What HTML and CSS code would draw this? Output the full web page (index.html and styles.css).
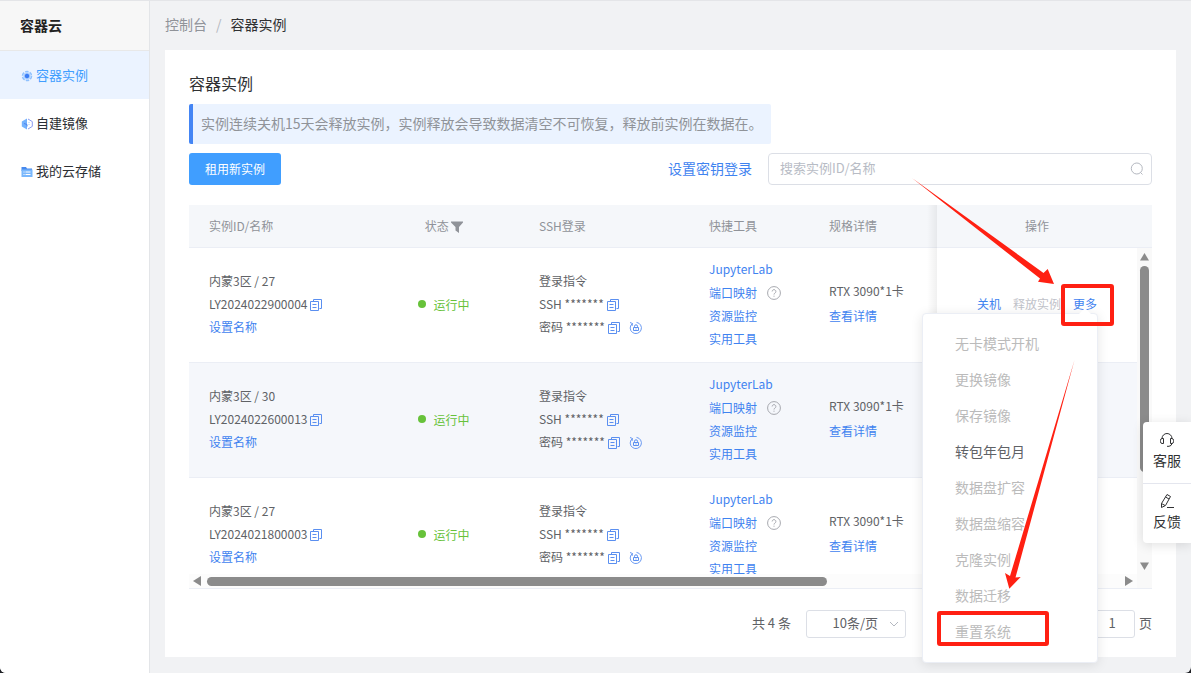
FILE: index.html
```html
<!DOCTYPE html>
<html lang="zh-CN">
<head>
<meta charset="utf-8">
<title>容器实例</title>
<link rel="stylesheet" href="styles.css">
</head>
<body>
<svg class="defs" aria-hidden="true">
  <symbol id="copy" viewBox="0 0 12 12"><path d="M3.500 2.500V.5h8v9h-2M.5 2.500h8v9h-8zM2.500 5.500h4M2.500 8.500h4" fill="none" stroke="currentColor"/></symbol>
  <symbol id="reset" viewBox="0 0 14 14"><path d="M3.300 2.600A5.600 5.600 0 1 0 7.500 1.400M1 1.500l2.500 1-.5 2.500" fill="none" stroke="currentColor" stroke-width=".9"/><path d="M5.500 6.500V5.300a1.500 1.500 0 0 1 3 0v1.200" fill="none" stroke="currentColor"/><path d="M4.500 6.500h5v3h-5zM6.500 8h1" fill="none" stroke="currentColor"/></symbol>
  <symbol id="help" viewBox="0 0 12 12"><circle cx="6" cy="6" r="5.500" fill="none" stroke="currentColor" stroke-width=".8"/><path d="M4.400 4.700a1.600 1.600 0 1 1 2.400 1.400Q6 6.500 6 7.300M6 8.300v.9" fill="none" stroke="currentColor" stroke-width=".8"/></symbol>
</svg>
<div class="app">
  <aside class="sidebar">
    <h1 class="brand">容器云</h1>
    <nav class="nav">
      <a class="nav-item active" href="#"><svg class="nav-icon" viewBox="0 0 12 12"><circle cx="6" cy="6" r="4.500" fill="none" stroke="#8fc1ff" stroke-width="1.600" stroke-dasharray="3.400 1.300"/><circle cx="6" cy="6" r="3.700" fill="#b5d5ff"/><path d="M6 3.500l2.200 1.200v2.600L6 8.500 3.800 7.300V4.700z" fill="#3b7df5"/></svg>容器实例</a>
      <a class="nav-item" href="#"><svg class="nav-icon" viewBox="0 0 12 12"><path d="M6 .6v10.800L.8 8.600V3.400z" fill="#74b2fd"/><path d="M7 1l4.300 2.600v4.800L7 11" fill="none" stroke="#8a9cf0"/><path d="M3 5.500l3 1v2" fill="none" stroke="#4b83ef"/><path d="M8 4v4" stroke="#9fcbff" stroke-dasharray="1 1"/></svg>自建镜像</a>
      <a class="nav-item" href="#"><svg class="nav-icon" viewBox="0 0 12 12"><path d="M.5 1h4.500l1 1.500h5V5H.5z" fill="#4689ee"/><path d="M.5 3.500h11V11H.5z" fill="#79b7fc"/><path d="M2.500 6h1m1 0h5m-7 2.500h1m1 0h5" stroke="#fff"/></svg>我的云存储</a>
    </nav>
  </aside>
  <main class="main">
    <nav class="crumbs"><a href="#">控制台</a><span class="slash">/</span><span class="current">容器实例</span></nav>
    <section class="card">
      <h2 class="title">容器实例</h2>
      <p class="notice">实例连续关机15天会释放实例，实例释放会导致数据清空不可恢复，释放前实例在数据在。</p>
      <div class="toolbar">
        <button class="primary" type="button">租用新实例</button>
        <a class="key-link" href="#">设置密钥登录</a>
        <div class="search"><input type="text" placeholder="搜索实例ID/名称" aria-label="搜索实例"><svg viewBox="0 0 14 14"><circle cx="6.800" cy="6.500" r="5.500" fill="none" stroke="currentColor"/><path d="M10.500 10.500l2 2" stroke="currentColor"/></svg></div>
      </div>
      <div class="table-box">
        <div class="viewport">
          <table class="grid">
            <colgroup><col class="c-id"><col class="c-state"><col class="c-ssh"><col class="c-tools"><col><col class="c-ops"><col class="c-gutter"></colgroup>
            <thead><tr><th>实例ID/名称</th><th class="center">状态 <svg class="filter" viewBox="0 0 12 12"><path d="M0 .5h12v1L8 6v6L4.500 9.500V6L0 1.500z" fill="currentColor"/></svg></th><th>SSH登录</th><th>快捷工具</th><th>规格详情</th><th class="center pinned">操作</th><th></th></tr></thead>
            <tbody>
              <tr>
                <td><div>内蒙3区 / 27</div><div class="line">LY2024022900004<svg class="copy"><use href="#copy"/></svg></div><div><a href="#">设置名称</a></div></td>
                <td class="center"><span class="running">运行中</span></td>
                <td><div>登录指令</div><div class="line">SSH *******<svg class="copy"><use href="#copy"/></svg></div><div class="line">密码 *******<svg class="copy"><use href="#copy"/></svg><svg class="reset"><use href="#reset"/></svg></div></td>
                <td><div><a href="#">JupyterLab</a></div><div class="line port"><a href="#">端口映射</a><svg class="help"><use href="#help"/></svg></div><div><a href="#">资源监控</a></div><div><a href="#">实用工具</a></div></td>
                <td class="spec"><div>RTX 3090*1卡</div><div><a href="#">查看详情</a></div></td>
                <td class="pinned"><div class="ops"><a href="#">关机</a><span class="off">释放实例</span><a href="#">更多</a></div></td><td class="gutter"></td>
              </tr>
              <tr>
                <td><div>内蒙3区 / 30</div><div class="line">LY2024022600013<svg class="copy"><use href="#copy"/></svg></div><div><a href="#">设置名称</a></div></td>
                <td class="center"><span class="running">运行中</span></td>
                <td><div>登录指令</div><div class="line">SSH *******<svg class="copy"><use href="#copy"/></svg></div><div class="line">密码 *******<svg class="copy"><use href="#copy"/></svg><svg class="reset"><use href="#reset"/></svg></div></td>
                <td><div><a href="#">JupyterLab</a></div><div class="line port"><a href="#">端口映射</a><svg class="help"><use href="#help"/></svg></div><div><a href="#">资源监控</a></div><div><a href="#">实用工具</a></div></td>
                <td class="spec"><div>RTX 3090*1卡</div><div><a href="#">查看详情</a></div></td>
                <td class="pinned"></td><td class="gutter"></td>
              </tr>
              <tr>
                <td><div>内蒙3区 / 27</div><div class="line">LY2024021800003<svg class="copy"><use href="#copy"/></svg></div><div><a href="#">设置名称</a></div></td>
                <td class="center"><span class="running">运行中</span></td>
                <td><div>登录指令</div><div class="line">SSH *******<svg class="copy"><use href="#copy"/></svg></div><div class="line">密码 *******<svg class="copy"><use href="#copy"/></svg><svg class="reset"><use href="#reset"/></svg></div></td>
                <td><div><a href="#">JupyterLab</a></div><div class="line port"><a href="#">端口映射</a><svg class="help"><use href="#help"/></svg></div><div><a href="#">资源监控</a></div><div><a href="#">实用工具</a></div></td>
                <td class="spec"><div>RTX 3090*1卡</div><div><a href="#">查看详情</a></div></td>
                <td class="pinned"></td><td class="gutter"></td>
              </tr>
            </tbody>
          </table>
        </div>
        <div class="hbar"><svg viewBox="0 0 8 10"><path d="M0 5l8-5v10z" fill="currentColor"/></svg><span class="htrack"><span class="hthumb"></span></span><svg viewBox="0 0 8 10"><path d="M8 5L0 0v10z" fill="currentColor"/></svg></div>
        <div class="vbar"><svg viewBox="0 0 9 8"><path d="M4.500 0L9 7.500H0z" fill="currentColor"/></svg><span class="vtrack"><span class="vthumb"></span></span><svg viewBox="0 0 9 8"><path d="M4.500 8L9 .5H0z" fill="currentColor"/></svg></div>
      </div>
      <div class="pager">
        <span class="total">共 4 条</span>
        <div class="size"><select aria-label="每页条数"><option>10条/页</option></select><svg viewBox="0 0 10 6"><path d="M1 1l4 4 4-4" fill="none" stroke="currentColor"/></svg></div>
        <label class="jump"><input type="text" value="1"><span>页</span></label>
      </div>
    </section>
  </main>
  <div class="menu">
    <button type="button" disabled>无卡模式开机</button>
    <button type="button" disabled>更换镜像</button>
    <button type="button" disabled>保存镜像</button>
    <button type="button">转包年包月</button>
    <button type="button" disabled>数据盘扩容</button>
    <button type="button" disabled>数据盘缩容</button>
    <button type="button" disabled>克隆实例</button>
    <button type="button" disabled>数据迁移</button>
    <button type="button" disabled>重置系统</button>
  </div>
  <div class="float">
    <button type="button"><svg viewBox="0 0 16 16" fill="none" stroke="currentColor"><path d="M3 6.500a5 5 0 0 1 10 0M4.500 6.500H3q-1.500 0-1.500 2v1q0 2 1.500 2h1.500zM11.500 6.500H13q1.500 0 1.500 2v1q0 2-1.500 2h-1.500zM13 11.500q-.5 2.500-3 2.800H8"/></svg>客服</button>
    <button type="button"><svg viewBox="0 0 16 16" fill="none" stroke="currentColor"><path d="M8 1.500l3.500 2L6.500 12.500l-4 2v-4zM6.500 4L10 6M2.500 10.500l3.500 2M8 14.500h7"/></svg>反馈</button>
  </div>
  <svg class="marks" viewBox="900 160 291 500" aria-hidden="true">
    <g fill="#ff2012"><path d="M912 178L1043.500 273 1047.700 269 1054 284 1038 281.700 1040 278.500z"/><path d="M1074.500 360L1015.500 577.500 1020.700 577 1009.300 588.700 1005 573 1010 576z"/></g>
    <g fill="none" stroke="#ff2012" stroke-width="4"><rect x="1063" y="286" width="49" height="38" rx="1"/><rect x="939" y="613" width="108" height="31" rx="1"/></g>
  </svg>
</div>
</body>
</html>
```

FILE: styles.css
```css
* { box-sizing: border-box; }
html { background: #202226; }
body { margin: 0; color: #606266; font: 12px/23px "Noto Sans CJK SC", sans-serif; }
a { color: #3f83f0; text-decoration: none; }
button, input, select { font: inherit; color: inherit; }
.defs { position: absolute; width: 0; height: 0; }

.app { position: relative; display: flex; min-height: 100vh; overflow: hidden; background: #f1f2f4; border-top: 1px solid #e4e5e8; border-radius: 0 0 6px 6px; }
.sidebar { flex: 0 0 150px; background: #fff; border-right: 1px solid #e3e5e8; }
.brand { margin: 0; padding: 0 20px; height: 50px; font-size: 14px; line-height: 48px; color: #222; background: #f7f7f7; border-bottom: 1px solid #e8e8e8; }
.nav-item { display: flex; align-items: center; gap: 3px; height: 48px; padding: 0 0 2px 21px; font-size: 13px; color: #2b2e33; }
.nav-item.active { color: #409eff; background: #ebf3ff; }
.nav-icon { width: 12px; height: 12px; margin-top: 4px; }

.main { flex: 1; min-width: 0; padding: 0 15px 15px; }
.crumbs { display: flex; align-items: center; height: 49px; padding-bottom: 2px; font-size: 14px; color: #303133; }
.crumbs a { color: #909399; }
.slash { margin: 0 9px; color: #b4b8c0; }
.card { padding: 19px 24px 19px; background: #fff; }
.title { margin: 0 0 7px; font-size: 16px; line-height: 28px; font-weight: 400; color: #303133; }
.notice { width: fit-content; margin: 0 0 9px; padding: 0 8px 2px; font-size: 14px; line-height: 38px; color: #909399; background: #ebf3ff; border-left: 4px solid #4485f4; border-radius: 2px; }
.toolbar { display: flex; align-items: center; gap: 16px; margin-bottom: 20px; }
.primary { width: 92px; height: 32px; padding: 0 0 2px; color: #fff; background: #409eff; border: 0; border-radius: 3px; }
.key-link { margin-left: auto; padding-bottom: 2px; font-size: 14px; }
.search { position: relative; flex: 0 1 384px; }
.search input { width: 100%; height: 32px; padding: 0 36px 4px 11px; font-size: 13px; background: #fff; border: 1px solid #dcdfe6; border-radius: 4px; }
.search input::placeholder { color: #b8bcc5; }
.search svg { position: absolute; right: 8px; top: 9px; width: 14px; height: 14px; color: #b4b8c0; }

.table-box { position: relative; border-bottom: 1px solid #ebeef5; }
.viewport { height: 369px; overflow: hidden; }
.grid { width: 100%; table-layout: fixed; border-collapse: separate; border-spacing: 0; }
.c-id { width: 180px; }
.c-state { width: 150px; }
.c-ssh { width: 170px; }
.c-tools { width: 120px; }
.c-ops { width: 200px; }
.c-gutter { width: 15px; }
th { height: 43px; padding: 0 0 2px 20px; font-weight: 400; text-align: left; color: #909399; background: #f5f7fa; border-bottom: 1px solid #ebeef5; }
td { height: 115px; padding: 0 0 3px 20px; border-bottom: 1px solid #ebeef5; }
tr:nth-child(even) td { background: #f5f7fb; }
th.center, td.center { padding-left: 0; text-align: center; }
th:last-child, td:last-child { padding: 0; }
.pinned { position: relative; padding-left: 0; }
.pinned::before { content: ""; position: absolute; top: 0; bottom: -1px; left: -10px; width: 10px; background: linear-gradient(to left, rgba(0, 0, 0, .06), transparent); }
.filter { width: 12px; height: 12px; vertical-align: -2px; }
.line { display: flex; align-items: center; }
.line svg { color: #5a8ff0; margin-top: 2px; }
.line .copy { width: 12px; height: 12px; margin-left: 3px; }
.line .reset { width: 14px; height: 14px; margin-left: 9px; }
.port { height: 24px; }
.line .help { width: 14px; height: 14px; margin-left: 10px; color: #a0a3a9; }
.spec { padding-bottom: 5px; line-height: 25px; }
.running { display: inline-flex; align-items: center; gap: 7px; color: #67c23a; }
.running::before { content: ""; width: 8px; height: 8px; border-radius: 50%; background: #67c23a; }
.ops { display: flex; justify-content: center; gap: 12px; }
.off { color: #bfc2c9; }

.hbar { display: flex; align-items: center; gap: 6px; height: 14px; margin-right: 15px; padding: 0 4px; color: #8b8b8b; background: #fcfcfc; }
.hbar svg { width: 8px; height: 10px; }
.htrack { flex: 1; }
.hthumb { display: block; width: 68%; height: 9px; background: #8b8b8b; border-radius: 5px; }
.vbar { position: absolute; top: 43px; right: 0; bottom: 0; width: 15px; display: flex; flex-direction: column; align-items: center; gap: 5px; padding: 5px 0 18px; color: #8b8b8b; background: #f9f9f9; }
.vbar svg { width: 9px; height: 8px; }
.vtrack { flex: 1; }
.vthumb { display: block; width: 9px; height: 206px; background: #8b8b8b; border-radius: 5px; }

.pager { display: flex; align-items: center; justify-content: flex-end; gap: 15px; padding-top: 21px; font-size: 13px; }
.total, .jump span { padding-bottom: 3px; }
.size { position: relative; }
.size select { display: block; appearance: none; width: 100px; height: 28px; padding: 0 27px 4px 0; text-align: right; text-align-last: right; background: #fff; border: 1px solid #dcdfe6; border-radius: 3px; }
.size svg { position: absolute; right: 7px; top: 11px; width: 10px; height: 6px; color: #b4b8c0; }
.jump { display: flex; align-items: center; gap: 4px; margin-left: 168px; }
.jump input { width: 46px; height: 28px; padding: 0 0 3px; text-align: center; border: 1px solid #dcdfe6; border-radius: 3px; }

.menu { position: absolute; top: 312px; right: 93px; width: 176px; padding: 11px 0 13px; background: #fff; border: 1px solid #ebeef5; border-radius: 4px; box-shadow: 0 2px 12px rgba(0, 0, 0, .1); }
.menu::before { content: ""; position: absolute; top: -6px; right: 6px; border: 6px solid transparent; border-top: 0; border-bottom-color: #fff; }
.menu button { display: block; width: 100%; height: 36px; padding: 0 32px; font-size: 14px; text-align: left; color: #606266; background: none; border: 0; }
.menu button:disabled { color: #bbb; }
.float { position: absolute; top: 421px; right: 0; width: 48px; background: #fff; border-radius: 4px 0 0 4px; box-shadow: 0 2px 12px rgba(0, 0, 0, .12); }
.float button { display: flex; flex-direction: column; align-items: center; gap: 1px; width: 100%; height: 61px; padding: 10px 0 0; font-size: 14px; line-height: 22px; color: #303133; background: none; border: 0; }
.float button + button { height: 60px; padding-top: 9px; border-top: 1px solid #e4e6ee; }
.float svg { flex: none; width: 16px; height: 16px; }
.marks { position: absolute; top: 159px; right: 0; width: 291px; height: 500px; pointer-events: none; }
```
